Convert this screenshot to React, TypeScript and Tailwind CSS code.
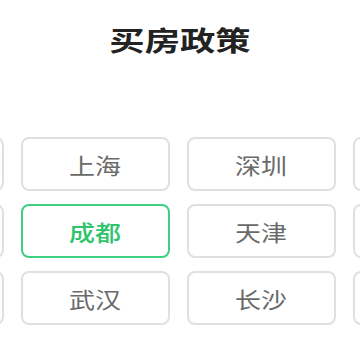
import React from "react";

const rows: string[][] = [
  ["", "上海", "深圳", ""],
  ["", "成都", "天津", ""],
  ["", "武汉", "长沙", ""],
];

export default function App() {
  const font = { fontFamily: '"Noto Sans CJK SC", "Noto Sans", sans-serif' };
  return (
    <div className="w-[360px] h-[360px] bg-white overflow-hidden" style={font}>
      <div className="pt-[20px] h-[60px] flex justify-center">
        <span className="inline-block text-[27px] leading-[40px] font-bold text-[#222222] scale-x-[1.31]">
          买房政策
        </span>
      </div>
      <div className="mt-[77px] flex justify-center">
        <div className="shrink-0 ml-[-3px] grid grid-cols-[repeat(4,149px)] auto-rows-[54px] gap-x-[17px] gap-y-[13px]">
          {rows.flat().map((c, i) => {
            const active = c === "成都";
            return (
              <div
                key={i}
                className={
                  active
                    ? "flex items-center justify-center rounded-[8px] border-2 border-[#3fcf80] bg-white"
                    : "flex items-center justify-center rounded-[8px] border-2 border-[#e0e0e0] bg-white"
                }
              >
                {c && (
                  <span
                    className={
                      active
                        ? "inline-block text-[22px] leading-none font-medium text-[#2fc46c] scale-x-[1.18]"
                        : "inline-block text-[22px] leading-none text-[#6a6a6a] scale-x-[1.18]"
                    }
                  >
                    {c}
                  </span>
                )}
              </div>
            );
          })}
        </div>
      </div>
    </div>
  );
}
